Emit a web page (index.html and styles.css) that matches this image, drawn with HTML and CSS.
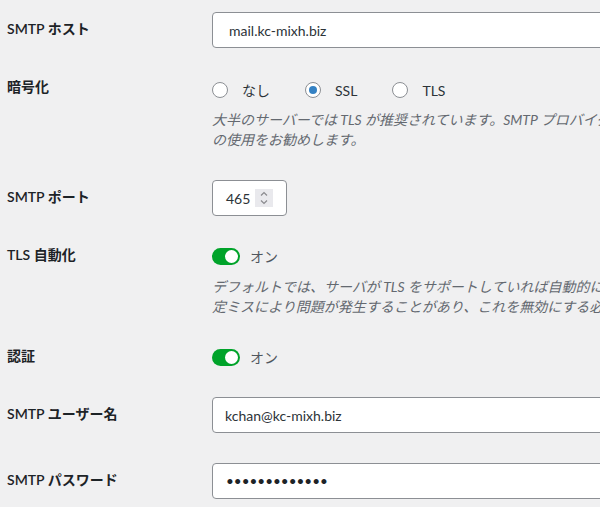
FILE: index.html
```html
<!DOCTYPE html>
<html lang="ja">
<head>
    <meta charset="UTF-8">
    <meta name="viewport" content="width=device-width, initial-scale=1.0">
    <title>SMTP 設定</title>
    <link rel="stylesheet" href="styles.css">
</head>
<body>

    <div class="form">
        <div class="row row-input">
            <div class="label">SMTP ホスト</div>
            <div class="field">
                <input class="text-input input-host" type="text" value="mail.kc-mixh.biz">
            </div>
        </div>

        <div class="row row-radio">
            <div class="label">暗号化</div>
            <div class="field">
                <div class="radios">
                    <label class="radio-item"><span class="radio"></span>なし</label>
                    <label class="radio-item"><span class="radio radio-checked"></span>SSL</label>
                    <label class="radio-item"><span class="radio"></span>TLS</label>
                </div>
                <p class="description">大半のサーバーでは TLS が推奨されています。SMTP プロバイダーが SSL と TLS の両方のオプションを提供している場合は、TLS<br>の使用をお勧めします。</p>
            </div>
        </div>

        <div class="row row-input">
            <div class="label">SMTP ポート</div>
            <div class="field">
                <div class="number-input">
                    <span class="number-value">465</span>
                    <span class="spinner">
                        <svg width="18" height="18" viewBox="0 0 18 18">
                            <path d="M6 6.5 L9 3.5 L12 6.5" fill="none" stroke="#8a8a8e" stroke-width="1.2"/>
                            <path d="M6 11.5 L9 14.5 L12 11.5" fill="none" stroke="#8a8a8e" stroke-width="1.2"/>
                        </svg>
                    </span>
                </div>
            </div>
        </div>

        <div class="row row-toggle">
            <div class="label">TLS 自動化</div>
            <div class="field">
                <div class="toggle-line">
                    <span class="toggle"><span class="knob"></span></span>
                    <span class="toggle-text">オン</span>
                </div>
                <p class="description description-toggle">デフォルトでは、サーバが TLS をサポートしていれば自動的に TLS 暗号化が使用されます (推奨)。場合によっては、サーバーの設<br>定ミスにより問題が発生することがあり、これを無効にする必要があります。</p>
            </div>
        </div>

        <div class="row row-toggle">
            <div class="label">認証</div>
            <div class="field">
                <div class="toggle-line">
                    <span class="toggle"><span class="knob"></span></span>
                    <span class="toggle-text">オン</span>
                </div>
            </div>
        </div>

        <div class="row row-input">
            <div class="label">SMTP ユーザー名</div>
            <div class="field">
                <input class="text-input" type="text" value="kchan@kc-mixh.biz">
            </div>
        </div>

        <div class="row row-input">
            <div class="label">SMTP パスワード</div>
            <div class="field">
                <input class="text-input input-password" type="password" value="aaaaaaaaaaaaa">
            </div>
        </div>
    </div>

</body>
</html>
```

FILE: styles.css
```css
body {
    margin: 0;
    background-color: #f0f0f1;
    color: #1d2327;
    font-family: 'Segoe UI', Lato, 'Noto Sans CJK JP', sans-serif;
    font-size: 14px;
    overflow: hidden;
}

.form {
    margin-top: -3px;
    padding-left: 7px;
    width: 1100px;
}

.row {
    display: grid;
    grid-template-columns: 205px 1fr;
    align-items: start;
}

.label {
    font-weight: 600;
    line-height: 20px;
}

.row-input .label {
    padding-top: 22px;
}

.row-radio .label {
    padding-top: 14px;
}

.row-toggle .label {
    padding-top: 14px;
}

.field {
    padding: 15px 0;
}

.text-input {
    box-sizing: border-box;
    width: 440px;
    height: 36px;
    margin: 0;
    padding: 0 12px;
    border: 1px solid #8c8f94;
    border-radius: 4px;
    background-color: #fff;
    color: #2c3338;
    font-family: inherit;
    font-size: 14px;
    outline: none;
    display: block;
}

.input-host {
    padding-left: 16px;
}

.input-password {
    padding-left: 13px;
    font-size: 13.5px;
    letter-spacing: 0;
    color: #1d2327;
}

.radios {
    display: flex;
    gap: 35px;
    height: 24px;
    align-items: center;
}

.radio-item {
    display: flex;
    align-items: center;
    gap: 14px;
    color: #2c3338;
}

.radio {
    box-sizing: border-box;
    width: 16px;
    height: 16px;
    border: 1px solid #8c8f94;
    border-radius: 50%;
    background-color: #fff;
    display: flex;
    align-items: center;
    justify-content: center;
}

.radio-checked::before {
    content: "";
    width: 8px;
    height: 8px;
    border-radius: 50%;
    background-color: #3582c4;
}

.description {
    margin: 8px 0 0;
    color: #646970;
    font-style: italic;
    line-height: 20px;
    white-space: nowrap;
}

.description-toggle {
    margin-top: 11px;
}

.number-input {
    box-sizing: border-box;
    width: 75px;
    height: 36px;
    padding: 0 13px 0 13px;
    border: 1px solid #8c8f94;
    border-radius: 4px;
    background-color: #fff;
    color: #2c3338;
    display: flex;
    align-items: center;
    justify-content: space-between;
}

.spinner {
    width: 18px;
    height: 18px;
    background-color: #e9e9ed;
    display: block;
}

.spinner svg {
    display: block;
}

.toggle-line {
    height: 20px;
    display: flex;
    align-items: center;
    gap: 10px;
}

.toggle {
    box-sizing: border-box;
    width: 28px;
    height: 17px;
    padding: 0 2px;
    border-radius: 9px;
    background-color: #00a32a;
    display: flex;
    align-items: center;
    justify-content: flex-end;
}

.knob {
    width: 13px;
    height: 13px;
    border-radius: 50%;
    background-color: #fff;
}

.toggle-text {
    color: #50575e;
}
```
